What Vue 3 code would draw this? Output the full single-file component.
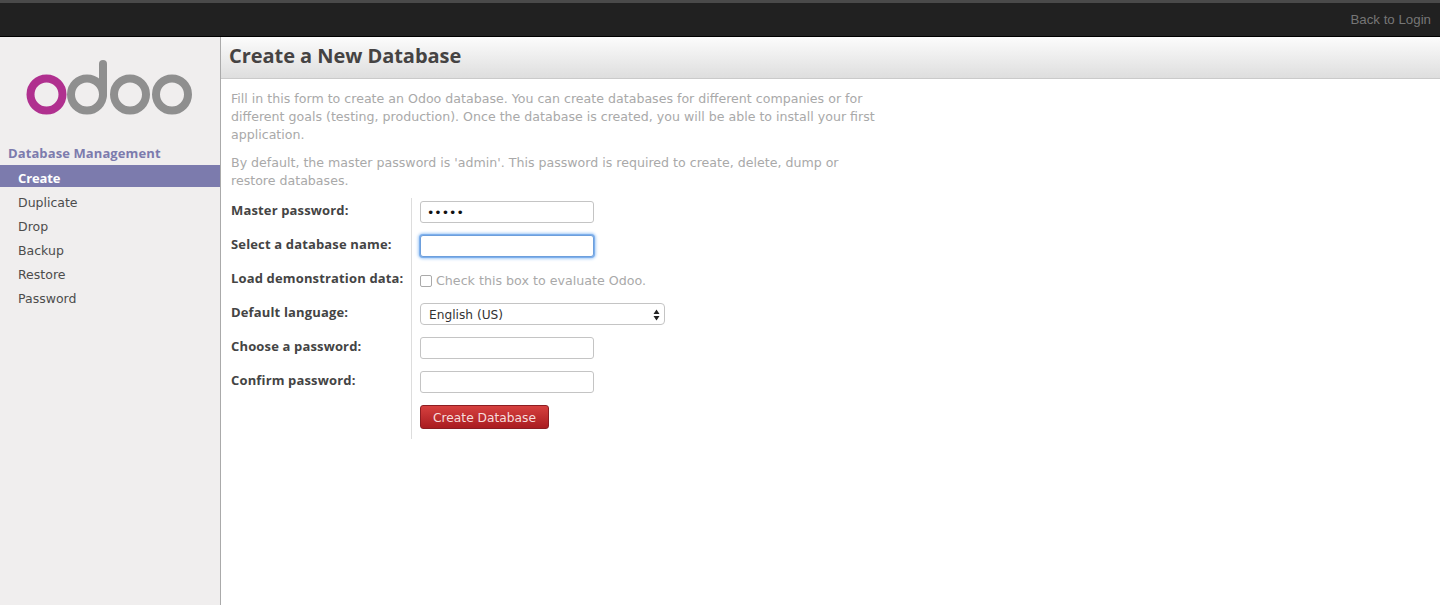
<script setup>
const menu = ['Create', 'Duplicate', 'Drop', 'Backup', 'Restore', 'Password']
</script>

<template>
  <div class="page">
    <header class="topbar">
      <a class="back">Back to Login</a>
    </header>
    <div class="body">
      <aside class="sidebar">
        <div class="logo">
          <svg width="170" height="62" viewBox="0 0 170 62" fill="none">
            <circle cx="20.5" cy="38.5" r="16" stroke="#b0308f" stroke-width="8" />
            <circle cx="61" cy="38.5" r="16" stroke="#8f8f8f" stroke-width="8" />
            <path d="M77 38.5V8" stroke="#8f8f8f" stroke-width="8" stroke-linecap="round" />
            <circle cx="104" cy="38.5" r="16" stroke="#8f8f8f" stroke-width="8" />
            <circle cx="146" cy="38.5" r="16" stroke="#8f8f8f" stroke-width="8" />
          </svg>
        </div>
        <div class="menu-title">Database Management</div>
        <ul class="menu">
          <li v-for="(m, i) in menu" :key="m" :class="{ active: i === 0 }">{{ m }}</li>
        </ul>
      </aside>
      <main class="main">
        <h1 class="title">Create a New Database</h1>
        <div class="content">
          <p class="intro">Fill in this form to create an Odoo database. You can create databases for different companies or for different goals (testing, production). Once the database is created, you will be able to install your first application.</p>
          <p class="intro last-intro">By default, the master password is 'admin'. This password is required to create, delete, dump or restore databases.</p>
          <form class="form" @submit.prevent>
            <label class="lbl">Master password:</label>
            <div class="field"><input class="inp" type="password" value="admin" /></div>
            <label class="lbl">Select a database name:</label>
            <div class="field"><input class="inp focus" type="text" /></div>
            <label class="lbl">Load demonstration data:</label>
            <div class="field check"><span class="box"></span><span>Check this box to evaluate Odoo.</span></div>
            <label class="lbl">Default language:</label>
            <div class="field">
              <div class="select">
                <span>English (US)</span>
                <svg width="7" height="12" viewBox="0 0 7 12"><path d="M3.5 0.5L6.5 5H0.5ZM3.5 11.5L0.5 7H6.5Z" fill="#222" /></svg>
              </div>
            </div>
            <label class="lbl">Choose a password:</label>
            <div class="field"><input class="inp" type="password" /></div>
            <label class="lbl">Confirm password:</label>
            <div class="field"><input class="inp" type="password" /></div>
            <div class="lbl"></div>
            <div class="field last"><button class="btn" type="submit">Create Database</button></div>
          </form>
        </div>
      </main>
    </div>
  </div>
</template>

<style>
html, body { margin: 0; background: #fff; }
</style>

<style scoped>
.page {
  height: 605px;
  overflow: hidden;
  display: flex;
  flex-direction: column;
  font-family: "DejaVu Sans", sans-serif;
  font-size: 12.5px;
  color: #444;
}
.topbar {
  height: 37px;
  box-sizing: border-box;
  flex: none;
  background: #212121;
  border-top: 3px solid #4a4a4a;
  border-bottom: 1px solid #000;
  display: flex;
  align-items: center;
  justify-content: flex-end;
  padding: 0 9px 0 0;
}
.back {
  font-family: "Liberation Sans", sans-serif;
  font-size: 13.3px;
  color: #767676;
}
.body { flex: 1; display: flex; min-height: 0; }
.sidebar {
  width: 221px;
  box-sizing: border-box;
  flex: none;
  background: #f0eeee;
  border-right: 1px solid #aaa;
}
.logo { height: 108px; box-sizing: border-box; padding: 19px 0 0 26px; }
.logo svg { display: block; }
.menu-title {
  height: 20px;
  line-height: 16px;
  padding-left: 8px;
  font-family: "Open Sans", sans-serif;
  font-weight: bold;
  font-size: 13px;
  letter-spacing: 0.1px;
  color: #7c7bad;
}
.menu { list-style: none; margin: 0; padding: 0; }
.menu li {
  height: 22px;
  line-height: 28px;
  margin-bottom: 2px;
  padding-left: 18px;
  color: #4c4c4c;
  font-size: 12.5px;
}
.menu li.active {
  background: #7c7bad;
  color: #fff;
  line-height: 26px;
  font-family: "Open Sans", sans-serif;
  font-weight: bold;
  font-size: 13px;
  letter-spacing: -0.1px;
}
.main { flex: 1; min-width: 0; }
.title {
  margin: 0;
  height: 42px;
  box-sizing: border-box;
  padding-left: 8px;
  line-height: 38px;
  font-family: "Open Sans", sans-serif;
  font-size: 20px;
  font-weight: bold;
  letter-spacing: -0.05px;
  color: #454343;
  background: linear-gradient(#fcfcfc, #dedede);
  border-bottom: 1px solid #cacaca;
}
.content { padding: 11px 0 0 10px; width: 650px; }
.intro {
  margin: 0 0 10px;
  line-height: 18px;
  font-size: 12.6px;
  color: #a9a9a9;
}
.last-intro { margin-bottom: 8px; }
.form {
  display: grid;
  grid-template-columns: 180px auto;
  justify-content: start;
}
.lbl {
  height: 34px;
  line-height: 24px;
  font-family: "Open Sans", sans-serif;
  font-weight: bold;
  font-size: 13px;
  letter-spacing: 0.15px;
  color: #444;
  white-space: nowrap;
}
.field {
  height: 34px;
  box-sizing: border-box;
  border-left: 1px solid #ddd;
  padding: 3px 0 0 8px;
}
.field.last { height: 37px; }
.inp {
  display: block;
  width: 174px;
  height: 22px;
  box-sizing: border-box;
  border: 1px solid #c4c4c4;
  border-radius: 3px;
  padding: 0 6px;
  background: #fff;
  font-family: "DejaVu Sans", sans-serif;
  font-size: 12.5px;
  outline: none;
  color: #111;
}
.inp.focus {
  border-color: #6d9fdc;
  box-shadow: 0 0 0 1px #7fb0ec, 0 0 3px 2px #a6ccf7;
}
.check {
  display: flex;
  align-items: center;
  gap: 4px;
  padding-top: 0;
  padding-bottom: 5px;
  font-size: 12.66px;
  color: #a9a9a9;
}
.box {
  width: 10px;
  height: 10px;
  border: 1px solid #aaa;
  border-radius: 2px;
  background: #fff;
}
.select {
  width: 245px;
  height: 22px;
  box-sizing: border-box;
  border: 1px solid #c4c4c4;
  border-radius: 4px;
  background: #fff;
  display: flex;
  align-items: center;
  justify-content: space-between;
  padding: 1px 4px 0 8px;
  font-size: 12.2px;
  color: #333;
}
.btn {
  display: block;
  width: 129px;
  height: 24px;
  box-sizing: border-box;
  border: 1px solid #8c1d22;
  border-radius: 3px;
  padding: 2px 0 0;
  background: linear-gradient(#d6403f, #a91c20);
  color: #f6dcdc;
  font-family: "DejaVu Sans", sans-serif;
  font-size: 12.25px;
}
</style>
